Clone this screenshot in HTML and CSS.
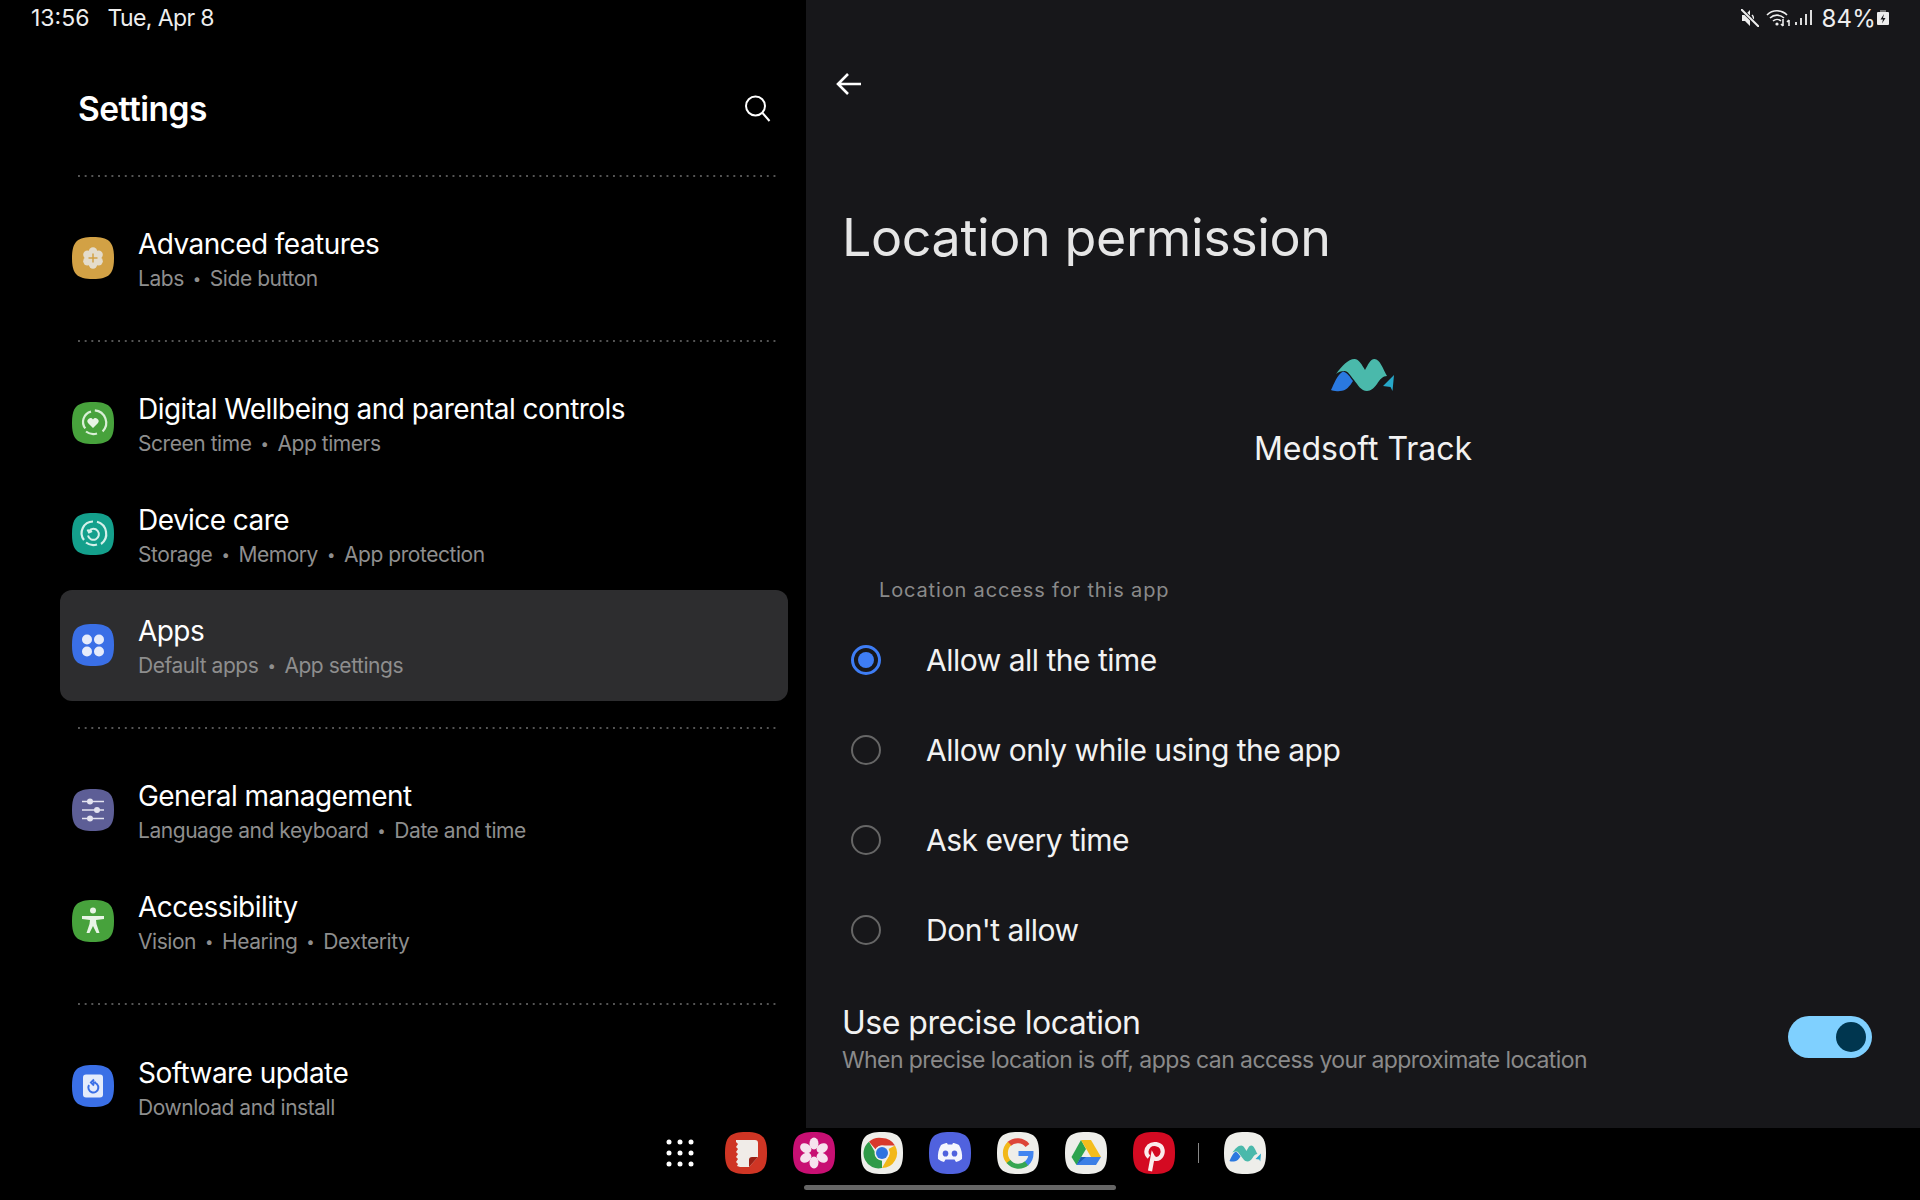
FILE: index.html
```html
<!DOCTYPE html>
<html lang="en">
<head>
<meta charset="utf-8">
<title>Location permission</title>
<link rel="stylesheet" href="styles.css">
</head>
<body>
<svg class="defs" width="0" height="0" aria-hidden="true"><defs>
<path id="sq" d="M21 0C37 0 42 5 42 21S37 42 21 42 0 37 0 21 5 0 21 0Z"/>
<g id="mark">
  <path d="M5 16C11 8 17 1 23.500 1C28 1 31 7 34 12C37 7 39 1 43.500 1C49 1 52 11 56 18C52 18 49 21 46 26C43 30 40 33 36 33C30 33 27 27 23 22C19 17 17 13 13.500 13C10 13 7 14 5 16Z" fill="#4ab9ab"/>
  <path d="M0 32C3 26 6 17 12 13.500C16 14 19 19 22 23C19 28 15 33 9 33C5 33.500 2 33 0 32Z" fill="#2a79e0"/>
  <path d="M63 17L52 28L59.500 29L61.500 33Z" fill="#27a8c9"/>
</g>
</defs></svg>
<div class="screen">
  <div class="panes">
    <aside class="left">
      <div class="status status-left"><span>13:56</span><span class="date">Tue, Apr 8</span></div>
      <header class="head">
        <h2 class="settings">Settings</h2>
        <svg class="search" width="30" height="30" viewBox="0 0 30 30" fill="none" stroke="#fff" stroke-width="2"><circle cx="13.500" cy="13" r="9.500"/><path d="M20.500 20l7 8"/></svg>
      </header>
      <div class="divider"></div>
      <div class="group">
        <div class="row">
          <svg class="icon" width="42" height="42" viewBox="0 0 42 42"><use href="#sq" fill="#d2a145"/><g fill="#e4dccb"><circle cx="21" cy="21" r="7.500"/><circle cx="21" cy="14.500" r="4.200"/><circle cx="21" cy="27.500" r="4.200"/><circle cx="15.400" cy="17.750" r="4.200"/><circle cx="26.600" cy="17.750" r="4.200"/><circle cx="15.400" cy="24.250" r="4.200"/><circle cx="26.600" cy="24.250" r="4.200"/></g><path d="M21 16.500v9M16.500 21h9" stroke="#d2a145" stroke-width="1.500"/></svg>
          <div class="text"><div class="t">Advanced features</div><div class="s">Labs<i>•</i>Side button</div></div>
        </div>
      </div>
      <div class="divider"></div>
      <div class="group">
        <div class="row">
          <svg class="icon" width="42" height="42" viewBox="0 0 42 42"><use href="#sq" fill="#47a23c"/><path d="M12.500 25A10.500 10.500 0 0 1 21 9.500M25 8.800A12.500 12.500 0 0 1 29 31" fill="none" stroke="#d9efd6" stroke-width="2.200" transform="rotate(-10 21 21)"/><path d="M14 29.500a12 12 0 0 0 11 2" fill="none" stroke="#d9efd6" stroke-width="2.200"/><path d="M21 26l-5-5a3 3 0 0 1 5-3.500a3 3 0 0 1 5 3.500z" fill="#e8f4e6"/></svg>
          <div class="text"><div class="t">Digital Wellbeing and parental controls</div><div class="s">Screen time<i>•</i>App timers</div></div>
        </div>
        <div class="row">
          <svg class="icon" width="42" height="42" viewBox="0 0 42 42"><use href="#sq" fill="#14a08c"/><path d="M12 27A11.500 11.500 0 0 1 21 8.500M25 8.800A12.500 12.500 0 0 1 29 31M14 29.500a12 12 0 0 0 11 2" fill="none" stroke="#d5f0ea" stroke-width="2.200"/><path d="M17 18a5.500 5.500 0 1 1-1 4.500M15.500 16.500l1.500 3 3-1.500" fill="none" stroke="#d5f0ea" stroke-width="2"/></svg>
          <div class="text"><div class="t">Device care</div><div class="s">Storage<i>•</i>Memory<i>•</i>App protection</div></div>
        </div>
        <div class="row active">
          <svg class="icon" width="42" height="42" viewBox="0 0 42 42"><use href="#sq" fill="#3a6fe6"/><g fill="#e6ecfb"><circle cx="15" cy="15.500" r="5"/><circle cx="27" cy="15.500" r="5"/><circle cx="15" cy="27.500" r="5"/><circle cx="27" cy="27.500" r="5"/></g></svg>
          <div class="text"><div class="t">Apps</div><div class="s">Default apps<i>•</i>App settings</div></div>
        </div>
      </div>
      <div class="divider"></div>
      <div class="group">
        <div class="row">
          <svg class="icon" width="42" height="42" viewBox="0 0 42 42"><use href="#sq" fill="#5d5e96"/><path d="M10 12.500h22M10 21h22M10 29.500h22" stroke="#e4e4f0" stroke-width="1.600"/><g fill="#e4e4f0"><circle cx="18" cy="12.500" r="3"/><circle cx="25" cy="21" r="3"/><circle cx="18" cy="29.500" r="3"/></g></svg>
          <div class="text"><div class="t">General management</div><div class="s">Language and keyboard<i>•</i>Date and time</div></div>
        </div>
        <div class="row">
          <svg class="icon" width="42" height="42" viewBox="0 0 42 42"><use href="#sq" fill="#47a23c"/><circle cx="21" cy="10.500" r="3" fill="#e8f4e6"/><path d="M10 16h22v3l-8 1 .5 4 3 9h-3L21 26l-3.500 7h-3l3-9 .5-4-8-1z" fill="#e8f4e6"/></svg>
          <div class="text"><div class="t">Accessibility</div><div class="s">Vision<i>•</i>Hearing<i>•</i>Dexterity</div></div>
        </div>
      </div>
      <div class="divider"></div>
      <div class="group">
        <div class="row">
          <svg class="icon" width="42" height="42" viewBox="0 0 42 42"><use href="#sq" fill="#3a6fe6"/><rect x="11" y="9.500" width="20" height="23" rx="3" fill="#e4ebfb"/><path d="M17 19a5 5 0 1 0 4-2.500h3M22 13.500l-3 3 3 3" transform="translate(0 1)" fill="none" stroke="#3a6fe6" stroke-width="2"/></svg>
          <div class="text"><div class="t">Software update</div><div class="s">Download and install</div></div>
        </div>
      </div>
    </aside>
    <main class="right">
      <div class="status status-right">
        <svg width="18" height="18" viewBox="0 0 18 18"><path d="M1 6h3l5-5v16l-5-5H1z" fill="#eee"/><path d="M11 6a4 4 0 0 1 0 6" fill="none" stroke="#eee" stroke-width="1.500"/><path d="M0 0l18 18" stroke="#17171a" stroke-width="3.500"/><path d="M0 0l18 18" stroke="#eee" stroke-width="2"/></svg>
        <svg class="wifi" width="24" height="18" viewBox="0 0 24 18" fill="none" stroke="#eee" stroke-width="1.600"><path d="M1 6a14 14 0 0 1 20 0M4 9a10 10 0 0 1 14 0M7 12a6 6 0 0 1 8 0"/><circle cx="11" cy="15" r="1.600" fill="#eee" stroke="none"/><path d="M17 10v7M15 15l2 2M23 17v-6M21 13l2-2"/></svg>
        <svg class="signal" width="17" height="18" viewBox="0 0 17 18" fill="#ddd"><rect x="0" y="13" width="2" height="3"/><rect x="5" y="9" width="2" height="7"/><rect x="10" y="5" width="2" height="11"/><rect x="15" y="1" width="2" height="15"/></svg>
        <span class="pct">84%</span>
        <svg class="batt" width="12" height="18" viewBox="0 0 12 18"><rect x="3" y="1" width="6" height="3" fill="#777"/><rect y="3" width="12" height="13" rx="1" fill="#eee"/><path d="M7 5L3.500 10.500H6L5 14.500 8.500 9H6z" fill="#17171a"/></svg>
      </div>
      <div class="back">
        <svg width="26" height="24" viewBox="0 0 26 24" fill="none" stroke="#fff" stroke-width="2.600"><path d="M25 12H2M12 2L2 12l10 10"/></svg>
      </div>
      <h1 class="title">Location permission</h1>
      <div class="app">
        <svg width="64" height="34" viewBox="0 0 64 34"><use href="#mark"/></svg>
        <div class="appname">Medsoft Track</div>
      </div>
      <div class="label">Location access for this app</div>
      <div class="radios">
        <div class="radio"><span class="dot on"></span><span>Allow all the time</span></div>
        <div class="radio"><span class="dot"></span><span>Allow only while using the app</span></div>
        <div class="radio"><span class="dot"></span><span>Ask every time</span></div>
        <div class="radio"><span class="dot"></span><span>Don't allow</span></div>
      </div>
      <div class="precise">
        <div><div class="pt">Use precise location</div><div class="ps">When precise location is off, apps can access your approximate location</div></div>
        <div class="toggle"><span class="knob"></span></div>
      </div>
    </main>
  </div>
  <footer class="taskbar">
    <div class="dock">
      <svg class="grid" width="28" height="28" viewBox="0 0 28 28" fill="#fff"><circle cx="3" cy="3" r="2.500"/><circle cx="14" cy="3" r="2.500"/><circle cx="25" cy="3" r="2.500"/><circle cx="3" cy="14" r="2.500"/><circle cx="14" cy="14" r="2.500"/><circle cx="25" cy="14" r="2.500"/><circle cx="3" cy="25" r="2.500"/><circle cx="14" cy="25" r="2.500"/><circle cx="25" cy="25" r="2.500"/></svg>
      <svg width="42" height="42" viewBox="0 0 42 42"><use href="#sq" fill="#cf3524"/><path d="M11 8h19a3 3 0 0 1 3 3v14l-9 10H15l-3-1 1-2-2-2 2-3-2-2 2-3-2-2 2-3-2-2 2-3-2-2z" fill="#f0ece8"/><path d="M33 25h-6a3 3 0 0 0-3 3v7z" fill="#9b2015"/></svg>
      <svg width="42" height="42" viewBox="0 0 42 42"><use href="#sq" fill="#c80f73"/><g fill="#f6e3ee"><ellipse cx="21" cy="11.500" rx="4.500" ry="6"/><ellipse cx="21" cy="30.500" rx="4.500" ry="6"/><ellipse cx="21" cy="11.500" rx="4.500" ry="6" transform="rotate(60 21 21)"/><ellipse cx="21" cy="11.500" rx="4.500" ry="6" transform="rotate(120 21 21)"/><ellipse cx="21" cy="11.500" rx="4.500" ry="6" transform="rotate(240 21 21)"/><ellipse cx="21" cy="11.500" rx="4.500" ry="6" transform="rotate(300 21 21)"/></g><circle cx="21" cy="21" r="3" fill="#c80f73"/></svg>
      <svg width="42" height="42" viewBox="0 0 42 42"><use href="#sq" fill="#eeeeea"/><path d="M21 6a15 15 0 0 1 13 7.500H21a7.500 7.500 0 0 0-6.500 3.800L8 9.800A15 15 0 0 1 21 6z" fill="#d8392c"/><path d="M34 13.500A15 15 0 0 1 21 36l6.500-11.300A7.500 7.500 0 0 0 27.500 17z" fill="#f2b818"/><path d="M21 36A15 15 0 0 1 8 9.800l6.500 11.300A7.500 7.500 0 0 0 21 28.500z" fill="#2f9a48"/><circle cx="21" cy="21" r="7.500" fill="#eee"/><circle cx="21" cy="21" r="6" fill="#2f73e0"/></svg>
      <svg width="42" height="42" viewBox="0 0 42 42"><use href="#sq" fill="#5062de"/><path d="M12 13c3-1.500 5-2 6-2l.8 1.500h4.400L24 11c1 0 3 .5 6 2 2.500 4 3.500 9 3 14-2 1.500-4 2.500-6 3l-1.500-2.500H16.500L15 30c-2-.5-4-1.500-6-3-.5-5 .5-10 3-14z" fill="#f4f5fd"/><ellipse cx="16.500" cy="21.500" rx="2.800" ry="3.100" fill="#5062de"/><ellipse cx="25.500" cy="21.500" rx="2.800" ry="3.100" fill="#5062de"/></svg>
      <svg width="42" height="42" viewBox="0 0 42 42" fill="none"><use href="#sq" fill="#eeeeea"/><path d="M30.500 13.500A13 13 0 0 0 12 12" stroke="#dd4438" stroke-width="5"/><path d="M12.500 11.500A13 13 0 0 0 12 30" stroke="#f2b818" stroke-width="5"/><path d="M11.500 29.500A13 13 0 0 0 30 31" stroke="#35a652" stroke-width="5"/><path d="M29.500 31.500A13 13 0 0 0 34 21.500H21.500" stroke="#4285f0" stroke-width="5"/></svg>
      <svg width="42" height="42" viewBox="0 0 42 42"><use href="#sq" fill="#eeeeea"/><path d="M16 8L6.500 25l5 8 9.500-16z" fill="#2ea44f"/><path d="M16 8h10l10 17H26z" fill="#f4bd1c"/><path d="M16 25h20l-5 8H11.500z" fill="#3b7fe6"/><path d="M11.500 33l4.500-8h5z" fill="#1a5fb8"/></svg>
      <svg width="42" height="42" viewBox="0 0 42 42"><use href="#sq" fill="#d40a22"/><path d="M16 25c-4-3-3-8 0-11 4-3.500 11-2 13 2 2 5-1 11-5.500 11-2 0-3-1-3.800-2.500L17 39" fill="none" stroke="#fbecec" stroke-width="4.200"/></svg>
      <span class="sep"></span>
      <svg width="42" height="42" viewBox="0 0 42 42"><use href="#sq" fill="#eeeeea"/><use href="#mark" transform="translate(5.500 13) scale(.5)"/></svg>
    </div>
    <div class="home"></div>
  </footer>
</div>
</body>
</html>
```
FILE: styles.css
```css
* { box-sizing: border-box; }
html, body { margin: 0; padding: 0; background: #000; }
body { font-family: Inter, "Noto Sans", sans-serif; color: #fff; }
.defs { display: block; position: absolute; }
.screen { width: 1920px; height: 1200px; display: flex; flex-direction: column; overflow: hidden; }
.panes { height: 1128px; display: flex; }
.left { width: 806px; height: 1128px; background: #000; overflow: hidden; }
.right { flex: 1; background: #17171a; padding: 0 48px 0 36px; }

.status { height: 36px; display: flex; align-items: center; font-size: 24px; color: #eee; }
.status-left { padding-left: 31px; gap: 18px; font-size: 23px; }
.date { letter-spacing: -0.6px; }
.status-right { justify-content: flex-end; margin-right: -17px; }
.status-right .wifi { margin-left: 7px; }
.status-right .signal { margin-left: 5px; }
.pct { margin-left: 9px; font-size: 24px; letter-spacing: 0.2px; }
.batt { margin-left: 1px; }

.head { height: 139px; padding: 6px 34px 0 78px; display: flex; align-items: center; justify-content: space-between; }
.settings { margin: 0; font-size: 33.500px; font-weight: 600; letter-spacing: -0.5px; }
.search { margin-bottom: 2px; }
.divider { height: 2px; margin: 0 30px 0 78px; background-image: linear-gradient(90deg, #555 2px, transparent 2px); background-size: 6.700px 2px; }
.group { padding: 26px 18px 26px 60px; }
.row { height: 111px; padding-left: 12px; display: flex; align-items: center; gap: 24px; border-radius: 12px; }
.row.active { background: #2d2d2f; }
.icon { flex: none; margin-bottom: 1px; }
.text { padding-top: 4px; }
.t { font-size: 28px; line-height: 36px; letter-spacing: -0.55px; color: #fff; }
.s { font-size: 21px; line-height: 28px; margin-top: 3px; letter-spacing: -0.45px; color: #8e8e8e; }
.s i { font-style: normal; margin: 0 9px; font-size: 15px; position: relative; top: -2px; }

.back { height: 96px; display: flex; align-items: center; }
.back svg { margin-left: -6px; }
.title { margin: 74px 0 0; font-size: 52px; line-height: 64px; font-weight: 400; letter-spacing: -0.4px; color: #e6e6e6; }
.app { margin: 88px -48px 0 -36px; display: flex; flex-direction: column; align-items: center; }
.app svg { display: block; }
.appname { margin-top: 37px; font-size: 32px; line-height: 40px; color: #f2f2f2; }
.label { margin: 107px 0 0 37px; font-size: 20px; line-height: 28px; letter-spacing: 0.85px; color: #8a8a8a; }
.radios { margin-top: 11px; }
.radio { height: 90px; display: flex; align-items: center; font-size: 30px; letter-spacing: -0.5px; color: #f2f2f2; }
.dot { width: 30px; height: 30px; margin: 0 45px 0 9px; border: 2px solid #666; border-radius: 50%; flex: none; }
.dot.on { border: 3px solid #3e7df5; position: relative; }
.dot.on::after { content: ""; position: absolute; inset: 4px; border-radius: 50%; background: #3e7df5; }
.precise { margin-top: 28px; display: flex; justify-content: space-between; align-items: center; }
.pt { font-size: 32px; line-height: 40px; letter-spacing: -0.5px; color: #f2f2f2; }
.ps { font-size: 23px; line-height: 28px; margin-top: 3px; letter-spacing: -0.58px; color: #8a8a8a; }
.toggle { width: 84px; height: 42px; margin-bottom: 4px; background: #7fd0ff; border-radius: 21px; display: flex; align-items: center; justify-content: flex-end; padding-right: 6px; }
.knob { width: 30px; height: 30px; border-radius: 50%; background: #00364f; }

.taskbar { height: 72px; background: #000; display: flex; flex-direction: column; align-items: center; }
.dock { height: 45px; padding-top: 4px; display: flex; align-items: center; gap: 26px; margin-left: 11px; }
.dock svg { flex: none; }
.dock .grid { margin-right: 5px; }
.sep { width: 1px; height: 20px; background: #888; margin: 0 -1px 0 -3px; }
.home { width: 312px; height: 5px; margin-top: 12px; border-radius: 3px; background: #666; }
```
